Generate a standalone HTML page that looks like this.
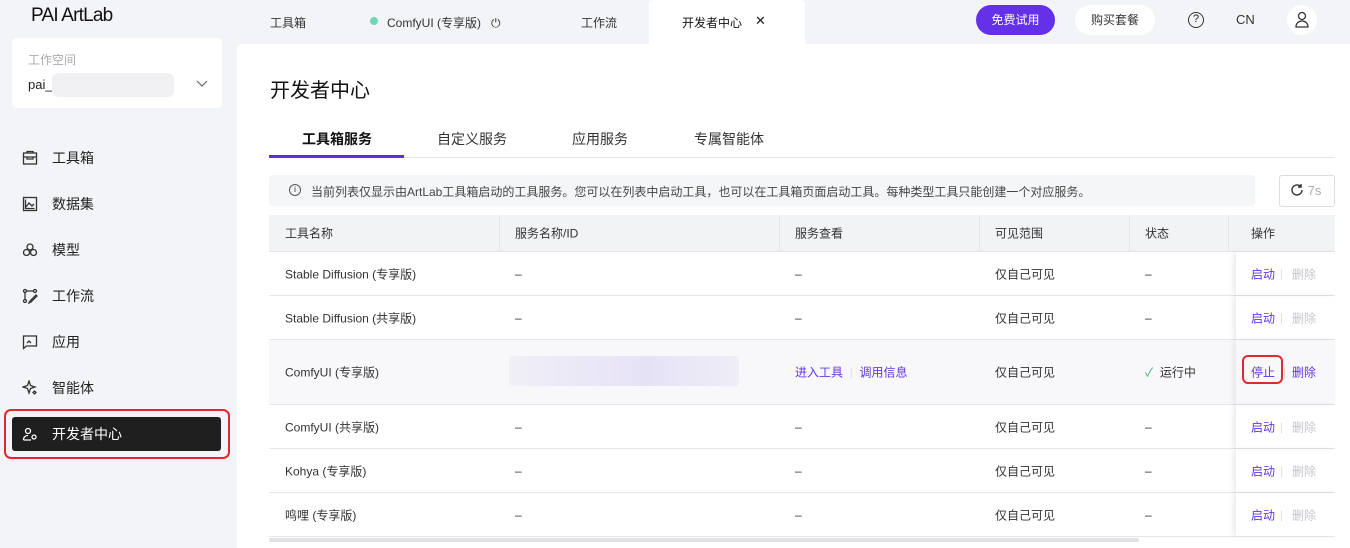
<!DOCTYPE html>
<html><head><meta charset="utf-8"><style>
*{box-sizing:border-box;margin:0;padding:0}
body{width:1350px;height:548px;overflow:hidden;background:#f3f4f7;font-family:"Liberation Sans","Noto Sans CJK SC",sans-serif;color:#222;position:relative;font-size:13px}
.a{position:absolute}
.logo{left:31px;top:5px;font-size:19px;font-weight:normal;letter-spacing:-0.8px;color:#111}
.ws{left:12px;top:38px;width:210px;height:70px;background:#fff;border-radius:4px}
.nav{left:22px;font-size:14px;color:#222;display:flex;align-items:center;gap:14px}
.nav svg{width:16px;height:16px}
.top{top:14px;font-size:12px;color:#333}
.main{left:237px;top:44px;width:1113px;height:504px;background:#fff;border-top-left-radius:6px}
.row{position:absolute;left:269px;width:1066px;border-bottom:1px solid #e6e7eb;font-size:12px;color:#333}
.row span{position:absolute;top:50%;transform:translateY(-50%);white-space:nowrap}
.lk{color:#6236e8}.dis{color:#c5c5cc}
.op{position:absolute;left:966px;top:0;bottom:0;width:100px;box-shadow:-3px 0 5px rgba(0,0,0,0.06);border-left:1px solid #eee}
</style></head><body>
<div class="a logo">PAI ArtLab</div>
<div class="a ws"><div class="a" style="left:16px;top:13px;font-size:12px;color:#aaa">工作空间</div>
<div class="a" style="left:16px;top:39px;font-size:13px;color:#222">pai_</div>
<div class="a" style="left:40px;top:35px;width:122px;height:24px;background:#f0f0f2;border-radius:6px"></div>
<svg class="a" style="left:184px;top:42px" width="12" height="8"><path d="M1 1l5 5 5-5" stroke="#666" fill="none" stroke-width="1.2"/></svg></div>

<div class="a nav" style="top:148px"><svg viewBox="0 0 16 16" fill="none" stroke="#333" stroke-width="1.3"><rect x="1.5" y="3" width="13" height="11"/><path d="M1.5 7h13M5 7v2h6V7M5 3V1.5h6V3"/></svg>工具箱</div>
<div class="a nav" style="top:194px"><svg viewBox="0 0 16 16" fill="none" stroke="#333" stroke-width="1.3"><rect x="1.5" y="1.5" width="13" height="13"/><path d="M3.5 3.5v9h9M4 11l3-4 3 3 2-2"/></svg>数据集</div>
<div class="a nav" style="top:240px"><svg viewBox="0 0 16 16" fill="none" stroke="#333" stroke-width="1.3"><circle cx="8" cy="5" r="3"/><circle cx="4.5" cy="10.5" r="3"/><circle cx="11.5" cy="10.5" r="3"/></svg>模型</div>
<div class="a nav" style="top:286px"><svg viewBox="0 0 16 16" fill="none" stroke="#333" stroke-width="1.3"><circle cx="3" cy="3" r="1.5"/><circle cx="3" cy="13" r="1.5"/><circle cx="13" cy="3" r="1.5"/><path d="M3 4.5v7M5 3h6M14 7l-6 6-1 2 2-1 6-6z"/></svg>工作流</div>
<div class="a nav" style="top:332px"><svg viewBox="0 0 16 16" fill="none" stroke="#333" stroke-width="1.3"><path d="M1.5 2h13v10h-10l-3 2.5z"/><path d="M5 9l2-2 2 2"/></svg>应用</div>
<div class="a nav" style="top:378px"><svg viewBox="0 0 16 16" fill="none" stroke="#333" stroke-width="1.3"><path d="M7 1l1.5 4.5L13 7l-4.5 1.5L7 13l-1.5-4.5L1 7l4.5-1.5z"/><path d="M12.5 11l1.5 1.5-1.5 1.5-1.5-1.5z"/></svg>智能体</div>
<div class="a" style="left:4px;top:409px;width:226px;height:50px;border:2px solid #e0282e;border-radius:7px"></div>
<div class="a" style="left:12px;top:417px;width:209px;height:34px;background:#1f1f1f;border-radius:3px"></div>
<div class="a nav" style="top:424px;color:#fff"><svg viewBox="0 0 16 16" fill="none" stroke="#fff" stroke-width="1.3"><circle cx="6" cy="5" r="2.5"/><path d="M1.5 14c0-3 2-4.5 4.5-4.5M9 14H1.5"/><circle cx="12" cy="11" r="2"/></svg>开发者中心</div>

<div class="a top" style="left:270px">工具箱</div>
<div class="a" style="left:370px;top:17px;width:8px;height:8px;border-radius:50%;background:#6ed8b4"></div>
<div class="a top" style="left:387px">ComfyUI (专享版)&nbsp;&nbsp;&nbsp;⏻</div>
<div class="a top" style="left:581px">工作流</div>
<div class="a" style="left:649px;top:0;width:156px;height:46px;background:#fff;border-radius:4px 4px 0 0"></div>
<div class="a top" style="left:682px;color:#111">开发者中心</div>
<div class="a" style="left:755px;top:13px;font-size:13px">✕</div>
<div class="a" style="left:976px;top:5px;width:79px;height:30px;border-radius:15px;background:#6430e8;color:#fff;font-size:12px;text-align:center;line-height:30px">免费试用</div>
<div class="a" style="left:1075px;top:5px;width:80px;height:30px;border-radius:15px;background:#fff;color:#333;font-size:12px;text-align:center;line-height:30px">购买套餐</div>
<div class="a" style="left:1188px;top:12px;width:16px;height:16px;border:1.4px solid #333;border-radius:50%;font-size:11px;text-align:center;line-height:13px">?</div>
<div class="a" style="left:1236px;top:12px;font-size:13px;color:#333">CN</div>
<div class="a" style="left:1287px;top:5px;width:30px;height:30px;border-radius:50%;background:#fff"></div>
<svg class="a" style="left:1294px;top:11px" width="16" height="18" fill="none" stroke="#333" stroke-width="1.3"><circle cx="8" cy="5" r="3.5"/><path d="M2 16c0-4 3-6 6-6s6 2 6 6z"/></svg>

<div class="a main"></div>
<div class="a" style="left:270px;top:74px;font-size:20px;color:#111">开发者中心</div>
<div class="a" style="left:269px;top:157px;width:1066px;height:1px;background:#e3e3e8"></div>
<div class="a" style="left:269px;top:155px;width:135px;height:3px;background:#5b2ee6"></div>
<div class="a" style="left:302px;top:129px;font-size:14px;font-weight:600;color:#111">工具箱服务</div>
<div class="a" style="left:437px;top:129px;font-size:14px;color:#333">自定义服务</div>
<div class="a" style="left:572px;top:129px;font-size:14px;color:#333">应用服务</div>
<div class="a" style="left:694px;top:129px;font-size:14px;color:#333">专属智能体</div>
<div class="a" style="left:269px;top:175px;width:986px;height:31px;background:#f5f6f8;border-radius:4px"></div>
<div class="a" style="left:289px;top:184px;width:12px;height:12px;border:1px solid #555;border-radius:50%;font-size:8px;text-align:center;line-height:10px">i</div>
<div class="a" style="left:311px;top:183px;font-size:12px;color:#444">当前列表仅显示由ArtLab工具箱启动的工具服务。您可以在列表中启动工具，也可以在工具箱页面启动工具。每种类型工具只能创建一个对应服务。</div>
<div class="a" style="left:1279px;top:175px;width:56px;height:32px;border:1px solid #ddd;border-radius:3px;font-size:13px;color:#aaa;line-height:30px;padding-left:10px"><svg width="14" height="14" viewBox="0 0 14 14" style="vertical-align:-2px" fill="none" stroke="#333" stroke-width="1.4"><path d="M12 7a5 5 0 1 1-1.5-3.6M11 1v3H8"/></svg> 7s</div>

<div class="row" style="top:215px;height:37px;background:#f2f3f5;border-bottom:1px solid #e3e3e8">
<span style="left:16px">工具名称</span><span style="left:246px">服务名称/ID</span><span style="left:526px">服务查看</span><span style="left:726px">可见范围</span><span style="left:876px">状态</span><span style="left:982px">操作</span>
<div class="a" style="left:230px;top:0;height:36px;border-left:1px solid #e3e3e8"></div><div class="a" style="left:510px;top:0;height:36px;border-left:1px solid #e3e3e8"></div><div class="a" style="left:710px;top:0;height:36px;border-left:1px solid #e3e3e8"></div><div class="a" style="left:860px;top:0;height:36px;border-left:1px solid #e3e3e8"></div><div class="a" style="left:959px;top:0;height:36px;border-left:1px solid #e3e3e8"></div>
</div>
<div class="row" style="top:252px;height:44px"><span style="left:16px">Stable Diffusion (专享版)</span><span style="left:246px">–</span><span style="left:526px">–</span><span style="left:726px">仅自己可见</span><span style="left:876px">–</span><div class="op"></div><span style="left:982px" class="lk">启动</span><span style="left:1011px;color:#ddd">|</span><span style="left:1023px" class="dis">删除</span></div>
<div class="row" style="top:296px;height:44px"><span style="left:16px">Stable Diffusion (共享版)</span><span style="left:246px">–</span><span style="left:526px">–</span><span style="left:726px">仅自己可见</span><span style="left:876px">–</span><div class="op"></div><span style="left:982px" class="lk">启动</span><span style="left:1011px;color:#ddd">|</span><span style="left:1023px" class="dis">删除</span></div>
<div class="row" style="top:340px;height:65px;background:#f8f8fa"><span style="left:16px">ComfyUI (专享版)</span>
<div class="a" style="left:240px;top:16px;width:230px;height:30px;background:linear-gradient(90deg,#f0eff6,#e6e2f6 60%,#efedf7);border-radius:4px"></div>
<span style="left:526px" class="lk">进入工具 <span style="position:static;transform:none;color:#ddd">&nbsp;|&nbsp;</span> 调用信息</span><span style="left:726px">仅自己可见</span><span style="left:876px"><span style="position:static;transform:none;color:#3bb36b">✓</span>&nbsp; 运行中</span><div class="op" style="background:#f8f8fa"></div>
<div class="a" style="left:973px;top:15px;width:41px;height:29px;border:2px solid #e0282e;border-radius:6px"></div>
<span style="left:982px" class="lk">停止</span><span style="left:1014px;color:#ddd">|</span><span style="left:1023px" class="lk">删除</span></div>
<div class="row" style="top:405px;height:44px"><span style="left:16px">ComfyUI (共享版)</span><span style="left:246px">–</span><span style="left:526px">–</span><span style="left:726px">仅自己可见</span><span style="left:876px">–</span><div class="op"></div><span style="left:982px" class="lk">启动</span><span style="left:1011px;color:#ddd">|</span><span style="left:1023px" class="dis">删除</span></div>
<div class="row" style="top:449px;height:44px"><span style="left:16px">Kohya (专享版)</span><span style="left:246px">–</span><span style="left:526px">–</span><span style="left:726px">仅自己可见</span><span style="left:876px">–</span><div class="op"></div><span style="left:982px" class="lk">启动</span><span style="left:1011px;color:#ddd">|</span><span style="left:1023px" class="dis">删除</span></div>
<div class="row" style="top:493px;height:44px"><span style="left:16px">鸣哩 (专享版)</span><span style="left:246px">–</span><span style="left:526px">–</span><span style="left:726px">仅自己可见</span><span style="left:876px">–</span><div class="op"></div><span style="left:982px" class="lk">启动</span><span style="left:1011px;color:#ddd">|</span><span style="left:1023px" class="dis">删除</span></div>
<div class="a" style="left:269px;top:538px;width:870px;height:4px;background:#e2e2e6;border-radius:2px"></div>
</body></html>
